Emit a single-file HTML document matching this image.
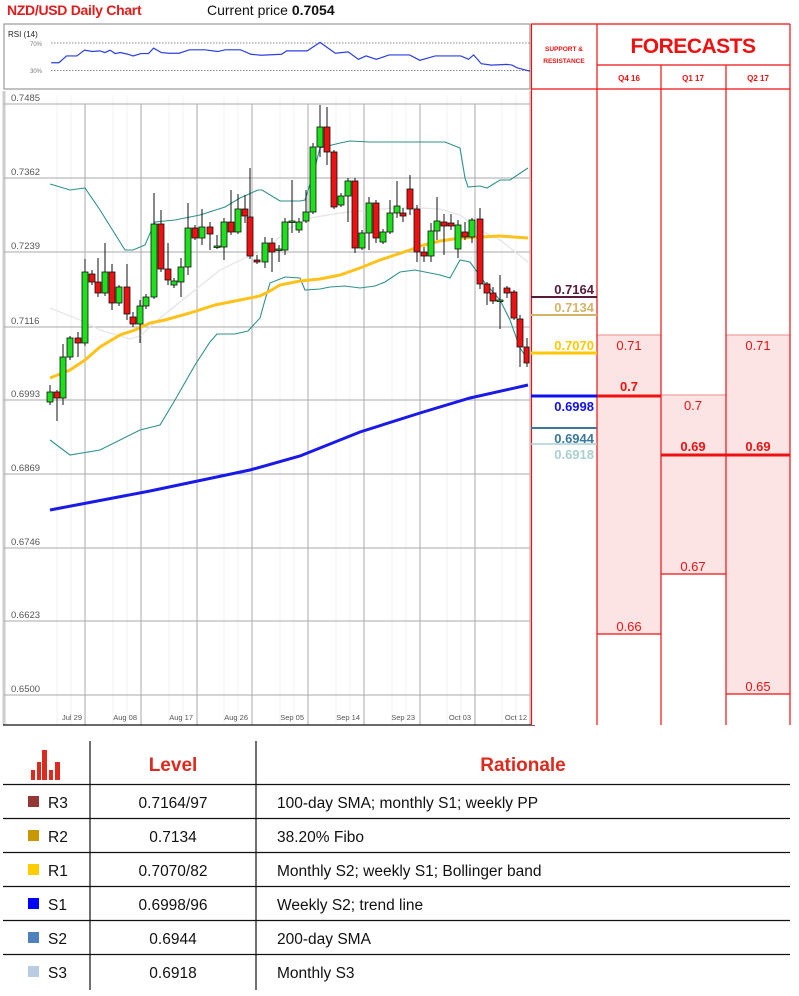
<!DOCTYPE html>
<html><head><meta charset="utf-8"><style>
body{margin:0;width:799px;height:996px;background:#fff;overflow:hidden;font-family:"Liberation Sans",sans-serif;position:relative}
.t{position:absolute;white-space:nowrap}
</style></head><body>
<div class="t" style="left:7px;top:2px;font-size:14px;font-weight:bold;color:#e31b1b;letter-spacing:-0.3px">NZD/USD Daily Chart</div>
<div class="t" style="left:207px;top:2px;font-size:14px;color:#111">Current price <b>0.7054</b></div>

<svg width="799" height="996" style="position:absolute;left:0;top:0" xmlns="http://www.w3.org/2000/svg">
<!-- RSI box -->
<rect x="4" y="24" width="526" height="65" fill="#fff" stroke="#999" stroke-width="1.2"/>
<text x="8" y="37" font-size="8" font-family="Liberation Sans" fill="#222">RSI (14)</text>
<text x="30" y="46" font-size="6" font-family="Liberation Sans" fill="#777">70%</text>
<text x="30" y="73" font-size="6" font-family="Liberation Sans" fill="#777">30%</text>
<line x1="51" y1="43" x2="530" y2="43" stroke="#666" stroke-dasharray="1.5,1.5" stroke-width="0.8"/>
<line x1="51" y1="70.5" x2="530" y2="70.5" stroke="#666" stroke-dasharray="1.5,1.5" stroke-width="0.8"/>
<g transform="scale(0.512,0.339)"><polyline fill="none" stroke="#2a3fe0" stroke-width="1.2" vector-effect="non-scaling-stroke" points="100,185 115,185 130,165 150,165 165,148 180,152 195,150 205,155 215,148 225,158 235,155 250,160 260,165 275,158 290,158 300,142 315,155 330,157 350,157 370,147 400,147 425,152 440,147 470,147 490,160 510,163 550,160 560,150 600,150 625,125 655,157 680,153 700,175 715,165 735,175 760,162 800,162 820,178 850,165 900,165 915,175 925,162 940,188 960,192 990,190 1000,192 1010,200 1035,210"/></g>

<!-- main chart -->
<line x1="4" y1="91" x2="4" y2="725" stroke="#ccc" stroke-width="3"/>
<g stroke="#f2f2f2" stroke-width="1">
<line x1="57" y1="95" x2="57" y2="725"/><line x1="71" y1="95" x2="71" y2="725"/><line x1="113" y1="95" x2="113" y2="725"/><line x1="127" y1="95" x2="127" y2="725"/><line x1="169" y1="95" x2="169" y2="725"/><line x1="183" y1="95" x2="183" y2="725"/><line x1="224" y1="95" x2="224" y2="725"/><line x1="238" y1="95" x2="238" y2="725"/><line x1="280" y1="95" x2="280" y2="725"/><line x1="294" y1="95" x2="294" y2="725"/><line x1="336" y1="95" x2="336" y2="725"/><line x1="350" y1="95" x2="350" y2="725"/><line x1="392" y1="95" x2="392" y2="725"/><line x1="406" y1="95" x2="406" y2="725"/><line x1="447" y1="95" x2="447" y2="725"/><line x1="461" y1="95" x2="461" y2="725"/><line x1="502" y1="95" x2="502" y2="725"/><line x1="516" y1="95" x2="516" y2="725"/>
</g>
<g stroke="#aaa" stroke-width="1">
<line x1="85" y1="104" x2="85" y2="725"/><line x1="141" y1="104" x2="141" y2="725"/><line x1="197" y1="104" x2="197" y2="725"/><line x1="252" y1="104" x2="252" y2="725"/><line x1="308" y1="104" x2="308" y2="725"/><line x1="364" y1="104" x2="364" y2="725"/><line x1="420" y1="104" x2="420" y2="725"/><line x1="475" y1="104" x2="475" y2="725"/><line x1="530" y1="91" x2="530" y2="725"/>
</g>
<g stroke="#aaa" stroke-width="1">
<line x1="4" y1="104" x2="530" y2="104"/><line x1="4" y1="178" x2="530" y2="178"/><line x1="4" y1="252" x2="530" y2="252"/><line x1="4" y1="327" x2="530" y2="327"/><line x1="4" y1="400" x2="530" y2="400"/><line x1="4" y1="474" x2="530" y2="474"/><line x1="4" y1="548" x2="530" y2="548"/><line x1="4" y1="621" x2="530" y2="621"/><line x1="4" y1="695" x2="530" y2="695"/>
</g>
<line x1="3" y1="725" x2="535" y2="725" stroke="#111" stroke-width="1.3"/>
<g font-family="Liberation Sans" font-size="9.5" fill="#555">
<text x="11" y="101">0.7485</text><text x="11" y="175">0.7362</text><text x="11" y="249">0.7239</text><text x="11" y="324">0.7116</text><text x="11" y="397">0.6993</text><text x="11" y="471">0.6869</text><text x="11" y="545">0.6746</text><text x="11" y="618">0.6623</text><text x="11" y="692">0.6500</text>
</g>
<g font-family="Liberation Sans" font-size="7.5" fill="#555" text-anchor="end">
<text x="82" y="720">Jul 29</text><text x="137" y="720">Aug 08</text><text x="193" y="720">Aug 17</text><text x="248" y="720">Aug 26</text><text x="304" y="720">Sep 05</text><text x="360" y="720">Sep 14</text><text x="415" y="720">Sep 23</text><text x="471" y="720">Oct 03</text><text x="527" y="720">Oct 12</text>
</g>

<!-- bands -->
<polyline fill="none" stroke="#e4e4e4" stroke-width="1.2" points="50,308 80,320 100,330 130,339 140,336 160,318 195,290 220,270 245,258 265,250 290,228 310,218 340,213 370,210 395,208 420,208 440,209 460,215 480,230 500,240 528,262"/>
<polyline fill="none" stroke="#2e9090" stroke-width="1.1" points="50,184 70,190 85,188 100,210 125,250 133,250 145,245 155,222 175,220 200,215 225,207 240,198 258,190 262,190 280,201 300,201 305,200 313,175 320,148 340,143 350,141 370,142 390,142 445,142 460,148 465,178 468,187 480,186 487,188 500,180 510,180 528,168"/>
<polyline fill="none" stroke="#2e9090" stroke-width="1.1" points="50,440 70,455 100,450 120,440 140,430 160,425 175,400 195,365 210,342 217,334 235,334 248,331 260,318 265,300 270,283 285,277 300,278 305,290 320,289 330,287 345,286 360,288 375,286 385,282 400,272 415,270 440,275 450,278 460,260 470,262 485,283 500,300 510,320 520,348 528,360"/>
<polyline fill="none" stroke="#ffc21a" stroke-width="3" points="50,378 70,370 85,360 100,347 120,335 135,330 150,323 165,320 190,313 215,305 240,300 260,296 268,292 280,285 300,281 320,279 340,275 360,268 380,260 395,255 410,250 420,246 440,241 460,238 480,237 500,236 528,238"/>
<polyline fill="none" stroke="#1a1ae8" stroke-width="3" points="50,510 150,491 250,470 300,456 360,432 420,413 470,398 528,385"/>

<!-- candles -->
<g stroke="#111" stroke-width="1">
<line x1="50" y1="385" x2="50" y2="405"/><line x1="57" y1="390" x2="57" y2="421"/><line x1="63" y1="344" x2="63" y2="405"/><line x1="70" y1="336" x2="70" y2="360"/><line x1="78" y1="332" x2="78" y2="357"/><line x1="85" y1="259" x2="85" y2="346"/><line x1="92" y1="270" x2="92" y2="285"/><line x1="98" y1="258" x2="98" y2="297"/><line x1="105" y1="243" x2="105" y2="296"/><line x1="112" y1="264" x2="112" y2="310"/><line x1="119" y1="285" x2="119" y2="306"/><line x1="127" y1="264" x2="127" y2="320"/><line x1="133" y1="312" x2="133" y2="327"/><line x1="140" y1="300" x2="140" y2="343"/><line x1="146" y1="294" x2="146" y2="309"/><line x1="154" y1="193" x2="154" y2="299"/><line x1="161" y1="210" x2="161" y2="272"/><line x1="168" y1="243" x2="168" y2="285"/><line x1="174" y1="278" x2="174" y2="288"/><line x1="181" y1="258" x2="181" y2="297"/><line x1="188" y1="203" x2="188" y2="275"/><line x1="195" y1="225" x2="195" y2="240"/><line x1="202" y1="209" x2="202" y2="245"/><line x1="210" y1="222" x2="210" y2="250"/><line x1="217" y1="235" x2="217" y2="249"/><line x1="224" y1="218" x2="224" y2="260"/><line x1="231" y1="190" x2="231" y2="235"/><line x1="238" y1="194" x2="238" y2="234"/><line x1="245" y1="195" x2="245" y2="223"/><line x1="250" y1="168" x2="250" y2="259"/><line x1="257" y1="255" x2="257" y2="264"/><line x1="265" y1="237" x2="265" y2="268"/><line x1="272" y1="238" x2="272" y2="272"/><line x1="279" y1="245" x2="279" y2="262"/><line x1="285" y1="218" x2="285" y2="255"/><line x1="292" y1="180" x2="292" y2="233"/><line x1="299" y1="218" x2="299" y2="233"/><line x1="306" y1="190" x2="306" y2="223"/><line x1="313" y1="143" x2="313" y2="214"/><line x1="320" y1="105" x2="320" y2="157"/><line x1="327" y1="107" x2="327" y2="165"/><line x1="334" y1="150" x2="334" y2="209"/><line x1="341" y1="193" x2="341" y2="207"/><line x1="348" y1="178" x2="348" y2="222"/><line x1="355" y1="178" x2="355" y2="253"/><line x1="362" y1="230" x2="362" y2="250"/><line x1="369" y1="197" x2="369" y2="250"/><line x1="376" y1="200" x2="376" y2="243"/><line x1="383" y1="229" x2="383" y2="244"/><line x1="390" y1="200" x2="390" y2="234"/><line x1="397" y1="181" x2="397" y2="218"/><line x1="403" y1="208" x2="403" y2="222"/><line x1="410" y1="175" x2="410" y2="215"/><line x1="417" y1="205" x2="417" y2="262"/><line x1="424" y1="247" x2="424" y2="262"/><line x1="431" y1="223" x2="431" y2="262"/><line x1="437" y1="197" x2="437" y2="240"/><line x1="444" y1="214" x2="444" y2="255"/><line x1="451" y1="214" x2="451" y2="230"/><line x1="458" y1="220" x2="458" y2="258"/><line x1="465" y1="222" x2="465" y2="240"/><line x1="472" y1="218" x2="472" y2="243"/><line x1="480" y1="208" x2="480" y2="289"/><line x1="487" y1="282" x2="487" y2="305"/><line x1="493" y1="287" x2="493" y2="304"/><line x1="500" y1="275" x2="500" y2="329"/><line x1="507" y1="286" x2="507" y2="298"/><line x1="514" y1="290" x2="514" y2="320"/><line x1="520" y1="315" x2="520" y2="367"/><line x1="527" y1="338" x2="527" y2="367"/>
</g>
<g stroke="#111" stroke-width="0.8">
<g fill="#1de01d">
<rect x="47" y="392" width="6" height="10"/><rect x="60" y="357" width="6" height="41"/><rect x="67" y="338" width="6" height="19"/><rect x="82" y="272" width="6" height="71"/><rect x="102" y="272" width="6" height="21"/><rect x="116" y="287" width="6" height="16"/><rect x="137" y="306" width="6" height="18"/><rect x="143" y="297" width="6" height="9"/><rect x="151" y="224" width="6" height="73"/><rect x="171" y="281" width="6" height="4"/><rect x="178" y="267" width="6" height="15"/><rect x="185" y="228" width="6" height="39"/><rect x="199" y="227" width="6" height="11"/><rect x="214" y="246" width="6" height="1.5"/><rect x="221" y="222" width="6" height="25"/><rect x="235" y="209" width="6" height="23"/><rect x="262" y="243" width="6" height="19"/><rect x="276" y="249" width="6" height="1.5"/><rect x="282" y="222" width="6" height="28"/><rect x="289" y="221" width="6" height="1.5"/><rect x="296" y="222" width="6" height="8"/><rect x="303" y="212" width="6" height="9"/><rect x="310" y="147" width="6" height="65"/><rect x="317" y="127" width="6" height="20"/><rect x="338" y="196" width="6" height="9"/><rect x="345" y="181" width="6" height="15"/><rect x="359" y="233" width="6" height="15"/><rect x="366" y="203" width="6" height="30"/><rect x="380" y="232" width="6" height="10"/><rect x="387" y="213" width="6" height="19"/><rect x="394" y="206" width="6" height="7"/><rect x="428" y="231" width="6" height="25"/><rect x="434" y="221" width="6" height="10"/><rect x="455" y="225" width="6" height="24"/><rect x="469" y="220" width="6" height="17"/><rect x="497" y="300" width="6" height="1.5"/>
</g>
<g fill="#ee1111">
<rect x="54" y="392" width="6" height="6"/><rect x="75" y="338" width="6" height="5"/><rect x="89" y="274" width="6" height="8"/><rect x="95" y="282" width="6" height="11"/><rect x="109" y="272" width="6" height="31"/><rect x="124" y="287" width="6" height="27"/><rect x="130" y="317" width="6" height="7"/><rect x="158" y="224" width="6" height="45"/><rect x="165" y="269" width="6" height="11"/><rect x="192" y="228" width="6" height="10"/><rect x="207" y="227" width="6" height="7"/><rect x="228" y="222" width="6" height="10"/><rect x="242" y="209" width="6" height="7"/><rect x="247" y="217" width="6" height="39"/><rect x="254" y="260" width="6" height="2"/><rect x="269" y="243" width="6" height="9"/><rect x="324" y="127" width="6" height="25"/><rect x="331" y="152" width="6" height="55"/><rect x="352" y="181" width="6" height="67"/><rect x="373" y="203" width="6" height="35"/><rect x="400" y="213" width="6" height="3"/><rect x="407" y="189" width="6" height="20"/><rect x="414" y="209" width="6" height="43"/><rect x="421" y="252" width="6" height="4"/><rect x="441" y="222" width="6" height="4"/><rect x="448" y="223" width="6" height="3"/><rect x="462" y="232" width="6" height="5"/><rect x="477" y="219" width="6" height="65"/><rect x="484" y="284" width="6" height="9"/><rect x="490" y="293" width="6" height="8"/><rect x="504" y="288" width="6" height="5"/><rect x="511" y="292" width="6" height="26"/><rect x="517" y="319" width="6" height="28"/><rect x="524" y="347" width="5" height="16"/>
</g>
</g>

<!-- right panel -->
<rect x="531" y="24" width="259" height="701" fill="#fff"/>
<rect x="597" y="335" width="64" height="299" fill="#fde4e4"/>
<rect x="661" y="395" width="65" height="179" fill="#fde4e4"/>
<rect x="726" y="335" width="64" height="359" fill="#fde4e4"/>
<g stroke="#f08a8a" stroke-width="1">
<line x1="597" y1="335" x2="661" y2="335"/><line x1="726" y1="335" x2="790" y2="335"/><line x1="661" y1="395" x2="726" y2="395"/>
</g>
<g stroke="#ee1111" stroke-width="1.2">
<line x1="531.5" y1="24" x2="531.5" y2="725"/><line x1="597" y1="24" x2="597" y2="725"/><line x1="661" y1="65" x2="661" y2="725"/><line x1="726" y1="65" x2="726" y2="725"/><line x1="790" y1="24" x2="790" y2="725"/>
<line x1="531" y1="24" x2="790" y2="24"/><line x1="597" y1="65" x2="790" y2="65"/><line x1="531" y1="89" x2="790" y2="89"/>
<line x1="597" y1="634" x2="661" y2="634"/><line x1="661" y1="574" x2="726" y2="574"/><line x1="726" y1="694" x2="790" y2="694"/>
</g>
<g stroke="#ee1111" stroke-width="3">
<line x1="531" y1="396" x2="661" y2="396"/><line x1="661" y1="455" x2="790" y2="455"/>
</g>
<line x1="531" y1="297" x2="597" y2="297" stroke="#5a1a3a" stroke-width="2"/>
<line x1="531" y1="315" x2="597" y2="315" stroke="#d4b46a" stroke-width="2"/>
<line x1="531" y1="353" x2="597" y2="353" stroke="#ffc800" stroke-width="3"/>
<line x1="531" y1="396" x2="597" y2="396" stroke="#1010ee" stroke-width="3"/>
<line x1="531" y1="428" x2="597" y2="428" stroke="#3a78a0" stroke-width="2"/>
<line x1="531" y1="444" x2="597" y2="444" stroke="#a8d0d0" stroke-width="1.5"/>
<g font-family="Liberation Sans" font-weight="bold" font-size="13" text-anchor="end">
<text x="594" y="294" fill="#5a1a3a">0.7164</text><text x="594" y="312" fill="#d4b46a">0.7134</text><text x="594" y="350" fill="#ffc800">0.7070</text><text x="594" y="411" fill="#1010ee">0.6998</text><text x="594" y="443" fill="#3a78a0">0.6944</text><text x="594" y="459" fill="#a8d0d0">0.6918</text>
</g>
<g font-family="Liberation Sans" font-size="6.5" font-weight="bold" fill="#ee1111" text-anchor="middle">
<text x="564" y="51">SUPPORT &amp;</text><text x="564" y="63">RESISTANCE</text>
</g>
<text x="693" y="53" font-family="Liberation Sans" font-size="21" font-weight="bold" fill="#ee1111" text-anchor="middle" letter-spacing="-0.5">FORECASTS</text>
<g font-family="Liberation Sans" font-size="8" font-weight="bold" fill="#ee1111" text-anchor="middle">
<text x="629" y="81">Q4 16</text><text x="693" y="81">Q1 17</text><text x="758" y="81">Q2 17</text>
</g>
<g font-family="Liberation Sans" font-size="13" fill="#ee1111" text-anchor="middle">
<text x="629" y="350">0.71</text><text x="758" y="350">0.71</text><text x="693" y="410">0.7</text><text x="629" y="631">0.66</text><text x="693" y="571">0.67</text><text x="758" y="691">0.65</text>
</g>
<g font-family="Liberation Sans" font-size="13" font-weight="bold" fill="#ee1111" text-anchor="middle">
<text x="629" y="391">0.7</text><text x="693" y="451">0.69</text><text x="758" y="451">0.69</text>
</g>

<!-- table -->
<g fill="#dd2a1e">
<rect x="31" y="770" width="4" height="10"/><rect x="37" y="762" width="4" height="18"/><rect x="42" y="750" width="5" height="30"/><rect x="49" y="770" width="4" height="10"/><rect x="55" y="762" width="5" height="18"/>
</g>
<g stroke="#111" stroke-width="1.2">
<line x1="90" y1="741" x2="90" y2="990"/><line x1="256" y1="741" x2="256" y2="990"/>
<line x1="3" y1="784.5" x2="790" y2="784.5"/><line x1="3" y1="818.5" x2="790" y2="818.5"/><line x1="3" y1="852.5" x2="790" y2="852.5"/><line x1="3" y1="886.5" x2="790" y2="886.5"/><line x1="3" y1="920.5" x2="790" y2="920.5"/><line x1="3" y1="954.5" x2="790" y2="954.5"/>
</g>
<g font-family="Liberation Sans" font-size="19" font-weight="bold" fill="#dd2a1e" text-anchor="middle">
<text x="173" y="771">Level</text><text x="523" y="771">Rationale</text>
</g>
<rect x="28" y="796" width="11" height="11" fill="#953735"/>
<rect x="28" y="830" width="11" height="11" fill="#c99700"/>
<rect x="28" y="864" width="11" height="11" fill="#ffcc00"/>
<rect x="28" y="898" width="11" height="11" fill="#0000ff"/>
<rect x="28" y="932" width="11" height="11" fill="#4f81bd"/>
<rect x="28" y="966" width="11" height="11" fill="#b8cce4"/>
<g font-family="Liberation Sans" font-size="15.5" fill="#111">
<text x="48" y="808">R3</text><text x="48" y="842">R2</text><text x="48" y="876">R1</text><text x="48" y="910">S1</text><text x="48" y="944">S2</text><text x="48" y="978">S3</text>
<text x="277" y="808">100-day SMA; monthly S1; weekly PP</text><text x="277" y="842">38.20% Fibo</text><text x="277" y="876">Monthly S2; weekly S1; Bollinger band</text><text x="277" y="910">Weekly S2; trend line</text><text x="277" y="944">200-day SMA</text><text x="277" y="978">Monthly S3</text>
</g>
<g font-family="Liberation Sans" font-size="15.5" fill="#111" text-anchor="middle">
<text x="173" y="808">0.7164/97</text><text x="173" y="842">0.7134</text><text x="173" y="876">0.7070/82</text><text x="173" y="910">0.6998/96</text><text x="173" y="944">0.6944</text><text x="173" y="978">0.6918</text>
</g>
</svg>
</body></html>
